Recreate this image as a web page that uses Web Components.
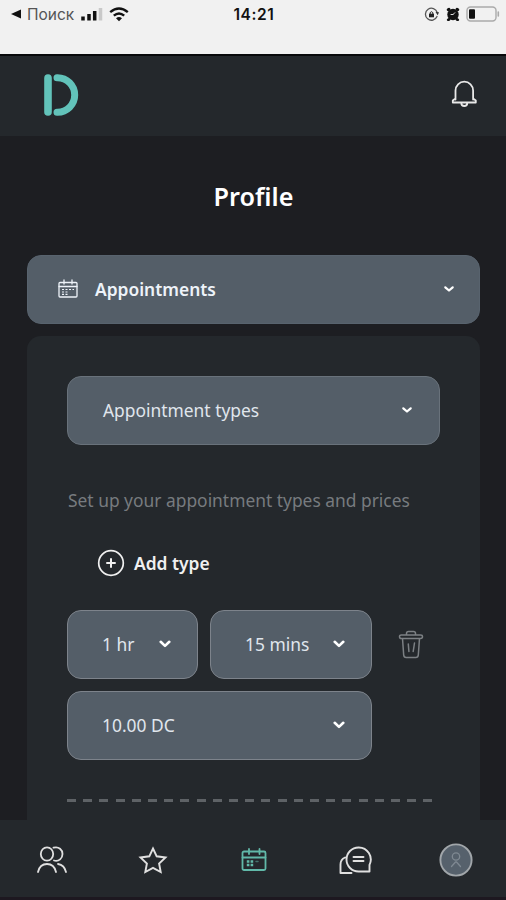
<!DOCTYPE html>
<html lang="en">
<head>
<meta charset="utf-8">
<title>Profile</title>
<style>
html,body{margin:0;height:100%;overflow:hidden;background:#1d1e22}
body{font-family:"Noto Sans",sans-serif;font-size:17.400px;color:#e3e8ed}
</style>
</head>
<body>
<profile-app></profile-app>
<script>
const ICONS = {
  logo: [36,44,'<path d="M5 5v34" stroke="#62c3ba" stroke-width="7.6"/><path d="M14 4.800h.5a17.200 17.200 0 0 1 0 34.400H14" stroke="#62c3ba" stroke-width="7"/>'],
  bell: [28,30,'<path d="M5.500 20.500V11.500a8.800 8.800 0 0 1 17.600 0v9M5.500 19.500l-2.700 2v2h23v-2l-2.700-2M11.300 24a3 3 0 0 0 6 0" stroke-width="1.800"/>'],
  calendar: [20,20,'<rect x="1" y="3.500" width="18" height="14.500" rx="1" stroke-width="1.300"/><path d="M1 7.500h18M6 1v4M14 1v4" stroke-width="1.300"/><path d="M4 10.500h2M7.500 10.500h2M11 10.500h2M14.500 10.500h1.500M4 13h2M7.500 13h2M4 15.300h2M7.500 15.300h2" stroke-width="1.200" stroke-linecap="butt"/>'],
  calnav: [26,24,'<rect x="1.500" y="3.500" width="23" height="18.500" rx="1.500"/><path d="M1.500 9.500h23M8 1v5M18.500 1v5"/><path d="M5.800 13.500h2.600M9.600 13.500h2.600M5.800 17h2.600M9.600 17h2.600" stroke-width="2.600" stroke-linecap="butt"/><path d="M15 13.500h2" stroke-width="1.500" opacity=".5"/>'],
  chevsmall: [12,8,'<path d="M2.300 2.300 6 5.500l3.700-3.200" stroke-width="2.200"/>'],
  chevron: [12,8,'<path d="M1.700 1.800 6 5.900l4.300-4.100" stroke-width="2.600"/>'],
  plus: [28,28,'<circle cx="14" cy="14" r="12.300" stroke-width="1.700"/><path d="M14 10v8M10 14h8" stroke-width="2"/>'],
  trash: [26,30,'<path d="M4.500 8.500 5.700 25q.2 2.500 2.500 2.500h9.600q2.300 0 2.500-2.500L21.500 8.500M3.500 5h19q2 0 2 1.700T22.500 8.500h-19q-2 0-2-1.800T3.500 5ZM8.500 5V3.500q0-2 2-2h5q2 0 2 2V5M10.300 14l.6 7.500M16.500 13l-1.300 8.500" stroke-width="1.500"/>'],
  users: [32,28,'<ellipse cx="11" cy="8" rx="6.200" ry="6.700"/><path d="M2 26c1.200-5.300 4.800-8 9-8s7.800 2.700 9 8M17.500 1.700c5.500-1.500 9 2 9 6.300s-3.500 7.800-8.500 6.500M22 18c4 .7 7 3.600 8 8"/>'],
  star: [30,28,'<path d="m15 2.500 3.700 7.800 8.800 1.200-6.400 6 1.600 8.500L15 21.900 7.300 26l1.600-8.500-6.400-6 8.800-1.200Z" stroke-linejoin="miter" stroke-width="1.900"/>'],
  chat: [34,30,'<path d="M20.500 2.500a12 12 0 1 0 0 24H31.500V19.800A12 12 0 0 0 20.500 2.500ZM15.500 12h10M15.500 16h10M7 12.500C4 13.800 2.500 16.500 2.500 19.500V28H13.500" stroke-width="1.900"/>'],
  avatar: [34,34,'<circle cx="17" cy="17" r="15.600" fill="#56616c" stroke="#a1a6aa" stroke-width="1.900"/><circle cx="17" cy="13.500" r="3.700" stroke="#7f8992" stroke-width="1.300"/><path d="m12.500 23.500 4-4.500h1l4 4.500" stroke="#7f8992" stroke-width="1.300"/>'],
  back: [12,12,'<path d="M1 6 11 1.500v9Z" fill="#111" stroke="none"/>'],
  signal: [24,14,'<path d="M3 13.500v-4M9 13.500V7M14.700 13.500V4" stroke="#111" stroke-width="3.500" stroke-linecap="butt"/><path d="M20.500 13.500V1" stroke="#c9c9c9" stroke-width="3.500" stroke-linecap="butt"/>'],
  wifi: [20,15,'<path d="M1.200 5.200q8.800-7.500 17.600 0M4.800 8.700q5.200-4.500 10.400 0" stroke="#111" stroke-width="2.400" stroke-linecap="butt"/><path d="m7 11.300q3-2.500 6 0l-3 3Z" fill="#111" stroke="none"/>'],
  lock: [16,14,'<path d="M13.200 5.500A6 6 0 1 0 13 9.500" stroke="#555" stroke-width="1.300"/><path d="m11.500 5 3.500.2-1.300 3Z" fill="#333" stroke="none"/><path d="M5 6.700h5v3.600H5Z" fill="#222" stroke="none"/><path d="M6.200 7V5.600q1.300-1.800 2.600 0V7" stroke="#222" stroke-width="1"/>'],
  alarm: [14,14,'<circle cx="7" cy="7.500" r="5.700" fill="#111" stroke="none"/><path d="m2.200 2.800.8-.5M11.800 2.800l-.8-.5M3 12.300l-.7.500M11 12.300l.7.500" stroke="#111" stroke-width="2.800"/><path d="M7 7.500H5M7 7.500l1.800-1.800" stroke="#ddd" stroke-width="1"/>'],
  battery: [34,16,'<rect x="1" y="1" width="29" height="14" rx="3.500" stroke="#aaa" stroke-width="1.400"/><rect x="3" y="3.200" width="6" height="9.600" rx="1" fill="#111" stroke="none"/><path d="M32.300 6v4" stroke="#aaa" stroke-width="1.600"/>']
};
function define(name, html){
  const t = document.createElement('template');
  t.innerHTML = html;
  customElements.define(name, class extends HTMLElement{
    constructor(){ super(); this.attachShadow({mode:'open'}).append(t.content.cloneNode(true)); }
  });
}
customElements.define('ui-icon', class extends HTMLElement{
  constructor(){ super(); this.attachShadow({mode:'open'}); }
  connectedCallback(){
    const [w,h,body] = ICONS[this.getAttribute('name')];
    this.shadowRoot.innerHTML = `<style>:host{display:block;flex:none;width:${w}px;height:${h}px}svg{display:block}</style>
    <svg width="${w}" height="${h}" viewBox="0 0 ${w} ${h}" fill="none" stroke="currentColor" stroke-width="1.8" stroke-linecap="round" stroke-linejoin="round">${body}</svg>`;
  }
});
define('status-bar', `<style>
:host{display:flex;box-sizing:border-box;height:56px;padding:0 6px 0 10px;background:#f1f1f1;border-bottom:2px solid #08090b;color:#111;font-family:Inter,sans-serif}
div{display:flex;flex:1;height:28px;align-items:center}
.l{gap:5px;font-size:15.500px;color:#555}.l span{margin-right:1px}.c{justify-content:center;font-size:15.500px;font-weight:600;letter-spacing:.6px}.r{justify-content:flex-end;gap:6px}
.c span{margin-right:2px}
</style><div class="l"><ui-icon name="back"></ui-icon><span>Поиск</span><ui-icon name="signal"></ui-icon><ui-icon name="wifi"></ui-icon></div>
<div class="c"><span>14:21</span></div>
<div class="r"><ui-icon name="lock"></ui-icon><ui-icon name="alarm"></ui-icon><ui-icon name="battery"></ui-icon></div>`);
define('app-header', `<style>
:host{display:flex;box-sizing:border-box;height:80px;padding:0 28px 3px 43px;align-items:center;justify-content:space-between;background:#24282c;color:#e8e8e8}
.b{padding-bottom:2px}
</style><ui-icon name="logo"></ui-icon><ui-icon class="b" name="bell"></ui-icon>`);
define('select-box', `<style>
:host{display:flex;box-sizing:border-box;height:69px;align-items:center;justify-content:space-between;padding:0 26px 2px 34px;background:#545e68;border:1.500px solid #7d838b;border-radius:14px;color:#e0e6ed;white-space:nowrap}
:host([main]){border-color:#58636e;font-weight:600;color:#eef3f9;padding-left:30px;padding-right:24px}
.t{display:flex;align-items:center;gap:17px}.v{color:#fff}.sm{display:none}
:host([light]){border-color:#69727b;padding-left:35px}
:host([main]) .sm,:host([light]) .sm{display:block}:host([main]) .lg,:host([light]) .lg{display:none}
</style><div class="t"><slot name="icon"></slot><slot></slot></div><ui-icon class="v lg" name="chevron"></ui-icon><ui-icon class="v sm" name="chevsmall"></ui-icon>`);
define('appointment-row', `<style>
:host{display:grid;grid-template-columns:131px 162px 1fr;column-gap:12px;row-gap:12px;align-items:center}
.w{grid-column:1/3}ui-icon{margin-left:14px;color:#7c8084}
</style><select-box>1 hr</select-box><select-box class="m">15 mins</select-box><ui-icon name="trash"></ui-icon><select-box class="w">10.00 DC</select-box>`);
define('add-button', `<style>
:host{display:flex;align-items:center;gap:9px;height:28px;color:#f0f0f0;font-weight:600}
</style><ui-icon name="plus"></ui-icon><span><slot></slot></span>`);
define('settings-panel', `<style>
:host{display:block;box-sizing:border-box;height:500px;padding:40px 40px 0;background:#24282c;border-radius:14px}
p{margin:43px 0 0 1px;height:24px;line-height:24px;color:#777b7f;white-space:nowrap}
add-button{margin:37px 0 33px 30px}
.d{margin-top:39px;width:366px;height:2.500px;background:repeating-linear-gradient(90deg,#5e6266 0 9px,transparent 9px 16.200px)}
</style><select-box light>Appointment types</select-box><p><span>Set up your appointment types and prices</span></p><add-button>Add type</add-button><appointment-row></appointment-row><div class="d"></div>`);
define('tab-bar', `<style>
:host{display:grid;grid-template-columns:repeat(5,101px);box-sizing:border-box;height:80px;padding:0 0 0 1px;background:#24282c;border-bottom:3px solid #1d1820;color:#e0e0e0;place-items:center;padding-top:2px}
.a{color:#61b9a9}
</style><ui-icon name="users"></ui-icon><ui-icon name="star"></ui-icon><ui-icon class="a" name="calnav"></ui-icon><ui-icon name="chat"></ui-icon><ui-icon name="avatar"></ui-icon>`);
define('profile-app', `<style>
:host{display:flex;flex-direction:column;width:506px;height:900px;overflow:hidden}
main{flex:1;min-height:0;overflow:hidden;padding:0 26px 0 27px}
h1{margin:43px 0 42px;height:34px;line-height:34px;font-size:25.200px;font-weight:600;text-align:center;color:#fff}
.s{margin-bottom:12px}
</style><status-bar></status-bar><app-header></app-header><main><h1>Profile</h1><select-box class="s" main><ui-icon slot="icon" name="calendar"></ui-icon><span>Appointments</span></select-box><settings-panel></settings-panel></main><tab-bar></tab-bar>`);
</script>
</body>
</html>
